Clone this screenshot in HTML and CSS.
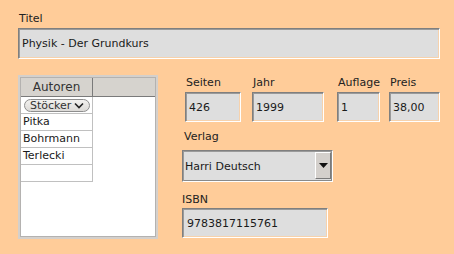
FILE: index.html
```html
<!DOCTYPE html>
<html lang="de">
<head>
  <meta charset="UTF-8">
  <title>Buch bearbeiten</title>
  <link rel="stylesheet" href="styles.css">
</head>
<body>

  <div class="form">
    <!-- Titel -->
    <div class="lbl">Titel</div>
    <div class="field title">Physik - Der Grundkurs</div>

    <div class="lower">
      <!-- Autoren table -->
      <div class="table">
        <div class="table-inner">
          <div class="thead">
            <div class="th">Autoren</div>
            <div class="th blank"></div>
          </div>
          <div class="col">
            <div class="cell edit">
              <span class="pill">Stöcker
                <svg width="10" height="7" viewBox="0 0 10 7"><path d="M1 1.5 L5 5.5 L9 1.5" fill="none" stroke="#222" stroke-width="1.6"/></svg>
              </span>
            </div>
            <div class="cell">Pitka</div>
            <div class="cell">Bohrmann</div>
            <div class="cell">Terlecki</div>
            <div class="cell"></div>
          </div>
        </div>
      </div>

      <!-- Details -->
      <div class="details">
        <div class="row">
          <div class="item seiten"><div class="lbl">Seiten</div><div class="field">426</div></div>
          <div class="item jahr"><div class="lbl">Jahr</div><div class="field">1999</div></div>
          <div class="item auflage"><div class="lbl">Auflage</div><div class="field">1</div></div>
          <div class="item preis"><div class="lbl">Preis</div><div class="field">38,00</div></div>
        </div>

        <div class="lbl verlag-lbl">Verlag</div>
        <div class="combo">
          <span class="combo-text">Harri Deutsch</span>
          <span class="combo-btn">
            <svg width="9" height="5" viewBox="0 0 9 5"><path d="M0 0 H9 L4.5 5 Z" fill="#111"/></svg>
          </span>
        </div>

        <div class="lbl isbn-lbl">ISBN</div>
        <div class="field isbn">9783817115761</div>
      </div>
    </div>
  </div>

</body>
</html>
```

FILE: styles.css
```css
body {
  margin: 0;
  background-color: #ffcc99;
  font-family: "DejaVu Sans", Verdana, sans-serif;
  font-size: 11px;
  color: #1a1a1a;
}
.form {
  padding: 12px 14px 0 18px;
}
.lbl {
  line-height: 13px;
  height: 13px;
  padding-left: 1px;
  color: #222;
}
.field {
  box-sizing: border-box;
  height: 30px;
  margin-top: 3px;
  padding-left: 3px;
  display: flex;
  align-items: center;
  background-color: #dedede;
  border: 1px solid;
  border-color: #7f7f7f #ffffff #ffffff #7f7f7f;
  box-shadow: inset 1px 1px 0 #9a9a9a, inset -1px -1px 0 #f6d2ad;
  white-space: nowrap;
}
.field.title {
  height: 31px;
}

/* lower part */
.lower {
  display: flex;
  margin-top: 16px;
}
.table {
  box-sizing: border-box;
  width: 140px;
  height: 164px;
  border: 2px solid #d4d0cc;
}
.table-inner {
  box-sizing: border-box;
  height: 100%;
  background-color: #fff;
  border: 1px solid #b4b2b0;
}
.thead {
  display: flex;
  height: 18px;
  background-color: #d6d3ce;
  border-bottom: 1px solid #7a7a7a;
}
.th {
  box-sizing: border-box;
  width: 72px;
  border-right: 1px solid #7a7a7a;
  font-size: 12px;
  line-height: 18px;
  text-align: center;
  color: #333;
}
.th.blank {
  flex: 1;
  border-right: none;
}
.col {
  width: 72px;
}
.cell {
  box-sizing: border-box;
  height: 17px;
  padding-left: 2px;
  line-height: 16px;
  border-right: 1px solid #c0c0c0;
  border-bottom: 1px solid #c0c0c0;
}
.cell.edit {
  padding-left: 3px;
  display: flex;
  align-items: center;
}
.pill {
  box-sizing: border-box;
  display: flex;
  align-items: center;
  gap: 3px;
  width: 66px;
  height: 13px;
  padding-left: 5px;
  border: 1px solid #8e8e8e;
  border-radius: 7px;
  background: linear-gradient(#f2f1ef, #dcdad7);
  color: #333;
  line-height: 11px;
}

/* details column */
.details {
  margin-left: 24px;
  width: 258px;
}
.row {
  display: flex;
  margin-top: 1px;
}
.item .lbl {
  padding-left: 1px;
}
.seiten { width: 56px; margin-left: 3px; }
.jahr { width: 72px; margin-left: 11px; }
.auflage { width: 43px; margin-left: 13px; }
.preis { width: 51px; margin-left: 9px; }

.verlag-lbl {
  margin-top: 8px;
  padding-left: 2px;
}
.combo {
  box-sizing: border-box;
  display: flex;
  align-items: stretch;
  width: 151px;
  height: 32px;
  margin-top: 7px;
  background-color: #dedede;
  border: 1px solid;
  border-color: #7f7f7f #ffffff #ffffff #7f7f7f;
  box-shadow: inset 1px 1px 0 #9a9a9a, inset -1px -1px 0 #8a8a8a;
}
.combo-text {
  flex: 1;
  display: flex;
  align-items: center;
  padding-left: 2px;
}
.combo-btn {
  box-sizing: border-box;
  width: 16px;
  margin: 1px 1px 2px 0;
  display: flex;
  align-items: center;
  justify-content: center;
  background-color: #d4d0cc;
  border: 1px solid;
  border-color: #ffffff #7a7a7a #7a7a7a #ffffff;
}

.isbn-lbl {
  margin-top: 11px;
  padding-left: 0;
}
.field.isbn {
  width: 146px;
  margin-top: 2px;
  padding-left: 4px;
}
```
